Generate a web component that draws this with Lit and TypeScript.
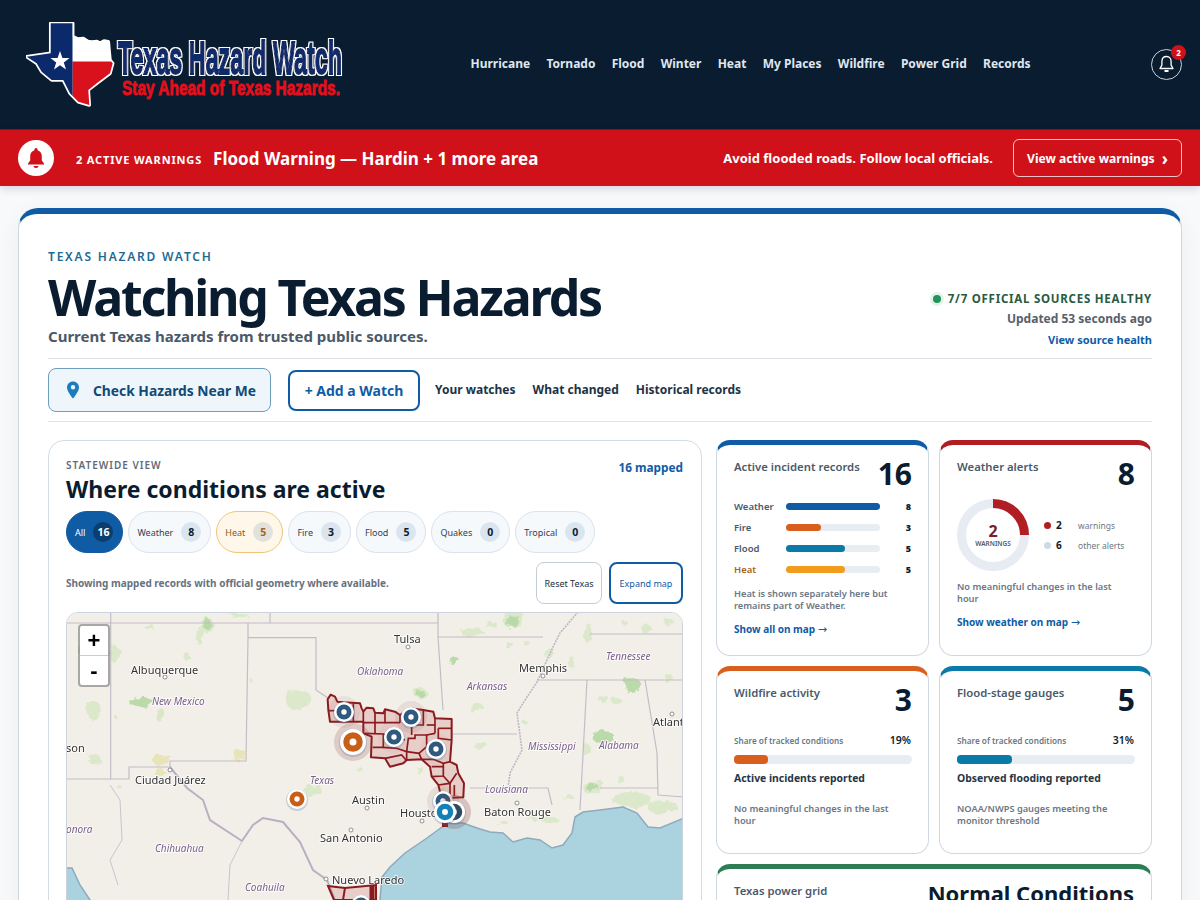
import { LitElement, html, css, svg } from "lit";
import { customElement } from "lit/decorators.js";

const pts = (a: number[][]) => a.map((p) => p.join(",")).join(" ");

const greens: number[][] = [
  [207,625,7,8],[240,615,10,2],[93,710,8,10],[115,718,3,3],[297,700,13,10],[200,637,3,8],[187,657,3,4],[150,627,3,2],[115,653,5,9],[160,715,3,5],[95,760,6,6],[312,790,8,6],[120,787,3,3],
  [513,620,10,8],[473,632,13,4],[492,625,5,4],[420,693,8,5],[477,707,7,5],[510,645,4,3],[527,643,3,2],[550,653,5,5],[572,662,3,6],[588,632,4,9],[603,698,5,3],[668,678,4,5],[618,700,6,3],[647,628,4,4],
  [587,748,4,6],[480,745,5,3],[593,787,10,6],[630,800,20,8],[663,807,16,7],[620,780,3,3],[570,797,5,3],[548,820,10,3],[503,823,4,3],[533,818,4,3],[668,622,5,3],[625,622,4,3],[525,722,4,2],[80,648,3,4],[250,680,2,2],[360,770,3,2],[442,790,3,2],[420,770,4,3],
];
const darkGreens: number[][] = [[142,702,10,5],[207,625,4,6],[455,660,5,3],[632,685,8,8],[602,737,10,7],[513,622,6,6],[420,693,5,3],[593,787,6,4]];
const yellows: number[][] = [[160,760,9,5],[238,755,6,5],[160,773,5,4],[160,716,3,5]];

const cities: [string, number, number, boolean][] = [
  ["Tulsa", 394, 643, false],["Albuquerque", 131, 674, false],["New Mexico", 152, 705, true],["Oklahoma", 357, 675, true],["Memphis", 519, 672, false],
  ["Arkansas", 467, 690, true],["Tennessee", 606, 660, true],["Atlanta", 653, 726, false],["Mississippi", 528, 750, true],["Alabama", 599, 749, true],
  ["son", 66, 752, false],["Ciudad Juárez", 135, 784, false],["Texas", 310, 784, true],["Austin", 352, 804, false],["Louisiana", 485, 793, true],
  ["Houston", 400, 817, false],["Baton Rouge", 484, 816, false],["San Antonio", 320, 842, false],["Chihuahua", 155, 852, true],["onora", 66, 833, true],
  ["Nuevo Laredo", 332, 884, false],["Coahuila", 245, 891, true],
];

const dots = [[165,677],[170,770],[408,647],[543,676],[367,808],[351,830],[422,821],[517,803],[672,714],[326,879]];

const outline = pts([[83,88],[92,74],[105,80],[112,95],[130,97],[180,100],[185,115],[190,125],[200,113],[220,115],[225,128],[250,130],[255,118],[285,125],[300,135],[330,115],[370,120],[400,125],[405,145],[455,147],[455,210],[450,275],[470,285],[475,310],[492,340],[490,382],[425,385],[415,345],[395,320],[390,290],[365,268],[320,270],[310,280],[270,290],[255,265],[213,262],[215,200],[190,190],[190,155],[90,155],[85,120]]);

const inner: number[][][] = [
  [[85,122],[160,122]],[[160,100],[160,155]],[[190,125],[190,155]],[[225,128],[225,192]],[[255,118],[255,160]],[[190,158],[300,158]],
  [[195,190],[250,192],[250,232],[218,232]],[[250,192],[315,210]],[[250,232],[290,235],[320,245],[320,270]],[[255,265],[305,255],[318,270]],
  [[320,245],[357,250],[365,268]],[[320,245],[325,205],[345,205],[345,195],[380,195],[380,230],[357,250]],[[335,165],[335,195]],[[370,120],[370,165],[335,165]],
  [[405,145],[405,190]],[[415,175],[455,175]],[[415,175],[415,205],[455,210]],[[380,165],[405,165]],[[380,195],[405,190]],[[365,268],[400,268],[430,280],[450,275]],
  [[395,290],[430,290],[430,280]],[[395,320],[430,318],[430,290]],[[430,318],[450,340],[470,310]],[[415,345],[450,340],[450,380]],[[463,345],[463,378]],[[300,158],[300,135]],
];

const pins: [number, number, number, string, number][] = [
  [344,712,10,"#2f5a80",.08],[353,742,13,"#c95f17",.2],[411,717,10,"#2f5a80",.1],[394,737,10,"#2f5a80",.05],[436,749,10,"#2f5a80",.05],
  [297,799,10,"#c95f17",0],[443,801,10,"#2f5a80",.1],[361,905,10,"#2f5a80",0],[454,812,11,"#2f4a60",.25],[445,812,11,"#1580b8",0],
];

const coast = [[380,900],[382,877],[390,867],[405,853],[427,838],[442,827],[448,823],[463,823],[477,828],[490,832],[503,833],[513,842],[527,838],[540,840],[552,848],[563,845],[572,833],[575,817],[583,812],[600,810],[623,807],[637,813],[648,827],[660,828],[684,818]];

@customElement("app-root")
export class AppRoot extends LitElement {
  static styles = css`
    :host { display: block; height: 900px; overflow: hidden; background: #f8f9fb; font-family: "Noto Sans", sans-serif; color: #0a1c2f; }
    a { text-decoration: none; color: inherit; }
    .top { height: 129px; background: #0a1c2f; display: flex; align-items: center; justify-content: space-between; padding: 0 18px 0 26px; border-bottom: 1px solid #2a3a4a; }
    .logo { display: block; width: 320px; height: 86px; }
    .logo text { font-family: "Liberation Sans", sans-serif; font-weight: 700; }
    .brand { fill: #0b2a6b; stroke: #0b2a6b; stroke-width: 2px; font-size: 47px; }
    .tag { fill: #e4101c; stroke: #e4101c; stroke-width: .8px; font-size: 21px; }
    nav { display: flex; gap: 16.25px; font-size: 12px; font-weight: 700; color: #dfe7ef; margin: -2px 0 0 4px; }
    .bellbtn { position: relative; width: 31px; height: 31px; box-sizing: border-box; border: 1px solid #c9d2da; border-radius: 50%; display: flex; align-items: center; justify-content: center; }
    .badge { position: absolute; top: -5px; right: -5px; width: 15px; height: 15px; border-radius: 50%; background: #d0111a; color: #fff; font-size: 8px; font-weight: 700; display: flex; align-items: center; justify-content: center; }
    .banner { height: 56px; background: #d0111a; color: #fff; display: flex; align-items: center; padding: 0 18px; box-shadow: 0 3px 8px rgba(10, 28, 47, .15); position: relative; }
    .bcircle { width: 36px; height: 36px; border-radius: 50%; background: #fff; display: flex; align-items: center; justify-content: center; margin-right: 22px; }
    .bcount { font-size: 11px; font-weight: 700; letter-spacing: .85px; margin-right: 11px; padding-top: 2px; }
    .btitle { font-size: 17px; font-weight: 700; flex: 1; }
    .bmsg { font-size: 13px; font-weight: 700; margin-right: 20px; }
    .bbtn { height: 38px; width: 169px; box-sizing: border-box; border: 1px solid #f3c4c6; border-radius: 6px; display: flex; align-items: center; justify-content: center; gap: 7px; font-size: 12.1px; font-weight: 700; }
    .bbtn b { font-size: 17px; font-weight: 700; line-height: 17px; }
    .page { padding: 22px 18px; }
    .hero { background: #fff; border: 1px solid #cfd8e3; border-top: 6px solid #0f5ca5; border-radius: 20px; padding: 35px 29px 30px; box-shadow: 0 6px 24px rgba(10, 28, 47, .05); }
    .head { display: flex; justify-content: space-between; align-items: flex-end; padding-bottom: 10px; border-bottom: 1px solid #dfe4ea; height: 99px; }
    .htext { align-self: flex-start; padding-top: 1px; }
    .eyebrow { font-size: 12px; font-weight: 600; letter-spacing: 1.8px; color: #1d6a94; line-height: 14px; }
    h1 { margin: 4px 0 0; font-size: 50px; line-height: 58px; font-weight: 700; letter-spacing: -2.2px; }
    .sub { font-size: 15px; font-weight: 700; color: #4a5a6a; line-height: 20px; margin-top: 0; }
    .status { display: flex; flex-direction: column; align-items: flex-end; }
    .health { display: flex; align-items: center; gap: 6px; font-size: 11.5px; font-weight: 700; letter-spacing: .75px; color: #2a5a40; line-height: 16px; }
    .hdot { width: 8px; height: 8px; border-radius: 50%; background: #229457; box-shadow: 0 0 0 3px #e3f3ea; margin-right: 1px; }
    .upd { font-size: 12px; font-weight: 700; color: #56616d; line-height: 16px; margin-top: 4px; }
    .vsh { font-size: 11px; font-weight: 700; color: #0f5ca5; line-height: 16px; margin-top: 5px; }
    .actions { display: flex; align-items: center; padding: 9px 0; border-bottom: 1px solid #dfe4ea; height: 44px; }
    .near { width: 223px; height: 44px; box-sizing: border-box; background: #eef6fc; border: 1px solid #6d9cbc; border-radius: 8px; display: flex; align-items: center; padding-left: 15px; gap: 11px; font-size: 13.8px; font-weight: 700; color: #114a75; margin-right: 17px; }
    .add { width: 132px; height: 41px; box-sizing: border-box; border: 2px solid #0f5ca5; border-radius: 8px; display: flex; align-items: center; justify-content: center; font-size: 14px; font-weight: 700; color: #0f5ca5; margin-right: 15px; }
    .lnk { font-size: 12px; font-weight: 700; color: #1d3346; margin: -2px 17px 0 0; }
    .grid { display: grid; grid-template-columns: 654px 1fr; gap: 14px; margin-top: 18px; }
    .panel { border: 1px solid #d3dbe4; border-radius: 16px; padding: 17px 18px 17px 17px; height: 600px; overflow: hidden; }
    .phead { display: flex; justify-content: space-between; }
    .kick { font-size: 10px; font-weight: 600; letter-spacing: 1px; color: #5f6c79; line-height: 14px; }
    .mapped { font-size: 11.8px; font-weight: 700; color: #0f5ca5; line-height: 18px; }
    h2 { margin: -2px 0 0; font-size: 23px; line-height: 30px; font-weight: 700; }
    .chips { display: flex; gap: 5px; margin-top: 7px; }
    .chip { height: 42px; box-sizing: border-box; border: 1px solid #dbe2ea; border-radius: 21px; background: #f6f9fc; display: flex; align-items: center; gap: 8px; padding: 0 9px 0 8px; font-size: 9px; color: #33414f; }
    .chip i { width: 20px; height: 20px; border-radius: 50%; background: #dbe5ef; font-style: normal; font-weight: 700; font-size: 10.5px; display: flex; align-items: center; justify-content: center; color: #0a1c2f; }
    .chip.on { background: #0f5ca5; border-color: #0f5ca5; color: #fff; }
    .chip.on i { background: #0b3d6e; color: #fff; }
    .chip.heat { background: #fff8ea; border-color: #eec678; color: #8a5a17; }
    .chip.heat i { background: #e2e2dc; color: #a8641a; }
    .tools { display: flex; align-items: center; margin-top: 9px; gap: 7px; }
    .tools span { flex: 1; font-size: 10px; font-weight: 700; color: #66727f; }
    .tbtn { height: 42px; box-sizing: border-box; border: 1px solid #c4ccd4; border-radius: 8px; display: flex; align-items: center; justify-content: center; font-size: 9px; width: 66px; color: #22303d; }
    .tbtn.pri { width: 74px; border: 2px solid #0f5ca5; color: #0f5ca5; }
    .map { position: relative; margin-top: 8px; height: 400px; border: 1px solid #cbd3dc; border-radius: 12px; overflow: hidden; box-sizing: border-box; }
    .map svg { display: block; position: absolute; left: -1px; top: -1px; }
    .map text { font-family: "Noto Sans", sans-serif; font-size: 11px; fill: #333; paint-order: stroke; stroke: rgba(255, 255, 255, .7); stroke-width: 2px; }
    .map text.st { font-style: italic; font-size: 10px; fill: #7a5f8a; }
    .zoom { position: absolute; left: 11px; top: 11px; width: 32px; box-sizing: border-box; background: #fff; border: 2px solid rgba(0, 0, 0, .3); border-radius: 4px; background-clip: padding-box; }
    .zoom div { height: 29px; display: flex; align-items: center; justify-content: center; font-family: "Liberation Sans", sans-serif; font-weight: 700; font-size: 22px; color: #000; }
    .zoom div + div { border-top: 1px solid #ccc; }
    .side { display: grid; grid-template-columns: 213px 213px; grid-template-rows: 216px 188px auto; gap: 10px; }
    .card { box-sizing: border-box; background: #fff; border: 1px solid #cfd8e3; border-top: 5px solid #0f5ca5; border-radius: 14px; padding: 13px 16px 13px 17px; }
    .card.wide { grid-column: span 2; height: 160px; border-top-color: #2f7d55; padding-right: 17px; }
    .ch { display: flex; justify-content: space-between; align-items: flex-start; height: 40px; }
    .ct { font-size: 11.3px; font-weight: 600; color: #4a5a6a; line-height: 18px; }
    .cv { font-size: 30px; font-weight: 700; line-height: 36px; margin-top: -2px; }
    .rows { display: grid; gap: 11px; margin-top: 2px; }
    .row { display: grid; grid-template-columns: 52px 94px 1fr; align-items: center; height: 10px; font-size: 9.5px; font-weight: 600; color: #4a5a6a; }
    .row.h { color: #a8641a; }
    .row b { text-align: right; color: #0a1c2f; font-size: 9px; padding-right: 1px; }
    .track { display: block; height: 7px; border-radius: 4px; background: #e8edf2; }
    .fill { display: block; height: 100%; border-radius: 4px; }
    .note { font-size: 9.25px; font-weight: 600; line-height: 12px; color: #6b7785; }
    .n-a { margin-top: 15px; }
    .n-b { margin-top: 10px; }
    .n-c { margin-top: 18px; }
    .cl { display: block; font-size: 10px; font-weight: 700; color: #0f5ca5; line-height: 14px; margin-top: 10px; }
    .cl span { font-family: "DejaVu Sans", sans-serif; font-weight: 400; font-size: 11px; }
    .donut { display: flex; align-items: center; margin-top: 1px; }
    .legend { display: grid; grid-template-columns: 7px 17px auto; align-items: center; column-gap: 5px; row-gap: 6px; margin-left: 15px; font-size: 8.5px; color: #6b7785; }
    .legend i { width: 7px; height: 7px; border-radius: 50%; }
    .legend b { font-size: 10px; color: #0a1c2f; line-height: 14px; }
    .share { display: flex; justify-content: space-between; align-items: center; font-size: 8.2px; font-weight: 600; color: #6b7785; margin-top: 8px; height: 16px; padding-right: 1px; }
    .share b { font-size: 10.5px; color: #0a1c2f; font-weight: 600; }
    .track.big { height: 9px; margin-top: 7px; border-radius: 5px; }
    .rep { font-size: 10.4px; font-weight: 700; color: #243646; line-height: 14px; margin-top: 7px; }
    .big-v { font-size: 22px; font-weight: 700; line-height: 30px; margin-top: -4px; }
  `;

  private texas() {
    const shape = pts([[50.7,23.3],[72.7,23.3],[72.7,36.7],[78,39],[83.3,38.6],[88,41.5],[92,42],[97,41.4],[100,43.2],[104,41],[108.3,41.7],[109,50],[110,60],[112.7,63.3],[110,73.3],[96.7,83.3],[88.3,90],[89.3,105],[78.3,101.7],[70,93.3],[63.3,80],[51.7,80],[41.7,71.7],[36.7,63.3],[26.7,56.7],[50.7,53.3]]);
    return svg`
      <defs>
        <clipPath id="tx"><polygon points=${shape}></polygon></clipPath>
        <filter id="halo" x="-5%" y="-15%" width="110%" height="130%">
          <feMorphology in="SourceAlpha" operator="dilate" radius="1" result="d"></feMorphology>
          <feFlood flood-color="#fff"></feFlood>
          <feComposite in2="d" operator="in" result="w"></feComposite>
          <feMerge><feMergeNode in="w"></feMergeNode><feMergeNode in="SourceGraphic"></feMergeNode></feMerge>
        </filter>
      </defs>
      <polygon points=${shape} fill="#fff" stroke="#fff" stroke-width="3.5" stroke-linejoin="round"></polygon>
      <g clip-path="url(#tx)">
        <rect x="20" y="20" width="52.7" height="90" fill="#0b2a6b"></rect>
        <rect x="72.7" y="20" width="45" height="41.5" fill="#fff"></rect>
        <rect x="72.7" y="61.5" width="45" height="50" fill="#d8111c"></rect>
      </g>
      <polygon points="60,51 62.4,58 69.6,58 63.8,62.4 66,69.4 60,65.2 54,69.4 56.2,62.4 50.4,58 57.6,58" fill="#fff"></polygon>`;
  }

  private mapSvg() {
    const blob = (list: number[][], fill: string, op: number) =>
      list.map((g) => svg`<ellipse cx=${g[0]} cy=${g[1]} rx=${g[2]} ry=${g[3]} fill=${fill} opacity=${op}></ellipse>`);
    return svg`<svg width="618" height="400" viewBox="66 612 618 400">
      <defs>
        <filter id="rough" x="0" y="0" width="100%" height="100%">
          <feTurbulence type="fractalNoise" baseFrequency=".12" numOctaves="3" seed="4"></feTurbulence>
          <feDisplacementMap in="SourceGraphic" scale="9" xChannelSelector="R" yChannelSelector="G"></feDisplacementMap>
        </filter>
      </defs>
      <rect x="66" y="612" width="618" height="400" fill="#f2efe9"></rect>
      <g filter="url(#rough)">
        ${blob(yellows, "#e6e2b4", .9)}
        ${blob(greens, "#d8e8c6", .9)}
        ${blob(darkGreens, "#b7d8a6", .95)}
      </g>
      <polygon points=${pts([...coast, [684,1012], [380,1012]])} fill="#aad3df" stroke="#8fa9bd" stroke-width="1.5"></polygon>
      <polygon points=${pts([[66,868],[72,868],[80,885],[90,900],[90,1012],[66,1012]])} fill="#aad3df" stroke="#8fa9bd" stroke-width="1.5"></polygon>
      <g fill="none" stroke="#c3bcc8" stroke-width="1.2">
        <polyline points="110.7,612 110.7,779"></polyline>
        <polyline points="66,623 248,623 248,637.7 316,637.7 316,690 328,698"></polyline>
        <polyline points="248,623 438,623"></polyline>
        <polyline points="248,637.7 246,761 170,761"></polyline>
        <polyline points="170,761 170,767 129,767 129,779 66,779"></polyline>
        <polyline points="270,612 270,623"></polyline>
        <polyline points="438,612 438,637 443,710"></polyline>
        <polyline points="452,734 517,734"></polyline>
        <polyline points="438,637 543,637"></polyline>
        <polyline points="537,680 684,680"></polyline>
        <polyline points="590,634 684,634"></polyline>
        <polyline points="587,680 580,810"></polyline>
        <polyline points="645,680 657,753 658,795 684,797"></polyline>
        <polyline points="600,788 658,788"></polyline>
        <polyline points="470,788 548,788 552,805"></polyline>
      </g>
      <polyline points="170,767 187,788 203,800 210,820 242,841 253,825 263,818 283,822 300,842 313,870 327,880 335,900" fill="none" stroke="#b9afc2" stroke-width="2"></polyline>
      <polyline points="242,841 230,865 228,900" fill="none" stroke="#c9c3cc" stroke-width="1"></polyline>
      <polyline points="110,785 120,800 122,840 110,860 118,885" fill="none" stroke="#c9c3cc" stroke-width="1"></polyline>
      <polyline points="578,612 560,633 553,647 547,660 537,682 527,697 517,713 522,750 510,773 508,788" fill="none" stroke="#bdb6c6" stroke-width="1.6" stroke-dasharray="2 1"></polyline>
      ${dots.map((d) => svg`<circle cx=${d[0]} cy=${d[1]} r="2" fill="#fff" stroke="#777" stroke-width=".8"></circle>`)}
      ${cities.map((c) => svg`<text x=${c[1]} y=${c[2]} class=${c[3] ? "st" : ""}>${c[0]}</text>`)}
      <g transform="translate(300 670) scale(.3333)">
        <polygon points=${outline} fill="rgba(185,50,50,.17)" stroke="#8b1a1e" stroke-width="6" stroke-linejoin="round"></polygon>
        ${inner.map((l) => svg`<polyline points=${pts(l)} fill="none" stroke="#8b1a1e" stroke-width="5"></polyline>`)}
      </g>
      <polygon points="328,886 345,888 376,885 376,900 334,900" fill="rgba(185,50,50,.17)" stroke="#8b1a1e" stroke-width="2"></polygon>
      <line x1="372" y1="885" x2="372" y2="900" stroke="#8b1a1e" stroke-width="5"></line>
      <polyline points="345,888 343,900" fill="none" stroke="#8b1a1e" stroke-width="2"></polyline>
      <line x1="445" y1="820" x2="445" y2="827" stroke="#8b1a1e" stroke-width="6"></line>
      ${pins.map((p) => svg`
        ${p[4] ? svg`<circle cx=${p[0]} cy=${p[1]} r=${p[2] + 6} fill="#8b3c3c" opacity=${p[4]}></circle>` : ""}
        <circle cx=${p[0]} cy=${p[1] + 1} r=${p[2] + 1} fill="rgba(60,110,160,.25)"></circle>
        <circle cx=${p[0]} cy=${p[1]} r=${p[2]} fill="#fff"></circle>
        <circle cx=${p[0]} cy=${p[1]} r=${p[2] * 0.75} fill=${p[3]}></circle>
        <circle cx=${p[0]} cy=${p[1]} r=${p[2] * 0.27} fill="#fff"></circle>`)}
    </svg>`;
  }

  render() {
    const nav = ["Hurricane","Tornado","Flood","Winter","Heat","My Places","Wildfire","Power Grid","Records"];
    const chips: [string, number, string][] = [["All",16,"on"],["Weather",8,""],["Heat",5,"heat"],["Fire",3,""],["Flood",5,""],["Quakes",0,""],["Tropical",0,""]];
    const rows: [string, number, string][] = [["Weather",8,"#0f5ca5"],["Fire",3,"#d95f1e"],["Flood",5,"#0a7ba8"],["Heat",5,"#f29b1c"]];
    return html`
      <header class="top">
        <svg class="logo" viewBox="26 22 320 86">
          ${this.texas()}
          <g filter="url(#halo)">
            <text class="brand" x="118" y="74" textLength="224" lengthAdjust="spacingAndGlyphs">Texas Hazard Watch</text>
          </g>
          <text class="tag" x="122" y="95" textLength="218" lengthAdjust="spacingAndGlyphs">Stay Ahead of Texas Hazards.</text>
        </svg>
        <nav>${nav.map((n) => html`<a>${n}</a>`)}</nav>
        <div class="bellbtn">
          <svg width="17" height="19" viewBox="0 0 17 19" fill="none" stroke="#fff" stroke-width="1.3" stroke-linejoin="round"><path d="M8.5 1.5c-3 0-4.600 2.200-4.600 5v3.600L2 13.500h13l-1.900-3.400V6.500c0-2.800-1.600-5-4.600-5z"></path><path d="M6.500 16h4" stroke-width="2"></path></svg>
          <span class="badge">2</span>
        </div>
      </header>
      <section class="banner">
        <div class="bcircle"><svg width="20" height="22" viewBox="0 0 20 22" fill="#d0111a"><path d="M10 1a1.600 1.600 0 0 0-1.600 1.600v.6C5.600 4 4.200 6.400 4.200 9v4.500L2 16.500v1h16v-1l-2.200-3V9c0-2.600-1.400-5-4.200-5.800v-.6A1.600 1.600 0 0 0 10 1z"></path><path d="M7.500 19h5a2.500 2 0 0 1-5 0z"></path></svg></div>
        <span class="bcount">2 ACTIVE WARNINGS</span>
        <span class="btitle">Flood Warning — Hardin + 1 more area</span>
        <span class="bmsg">Avoid flooded roads. Follow local officials.</span>
        <a class="bbtn">View active warnings <b>›</b></a>
      </section>
      <main class="page">
        <div class="hero">
          <div class="head">
            <div class="htext">
              <div class="eyebrow">TEXAS HAZARD WATCH</div>
              <h1>Watching Texas Hazards</h1>
              <div class="sub">Current Texas hazards from trusted public sources.</div>
            </div>
            <div class="status">
              <div class="health"><span class="hdot"></span>7/7 OFFICIAL SOURCES HEALTHY</div>
              <div class="upd">Updated 53 seconds ago</div>
              <a class="vsh">View source health</a>
            </div>
          </div>
          <div class="actions">
            <a class="near"><svg width="18" height="18" viewBox="0 0 18 18"><path fill="#1b7cbf" d="M9 .5c-3.300 0-6 2.600-6 5.900C3 10.500 9 17.500 9 17.500s6-7 6-11.100C15 3.100 12.300.5 9 .5zm0 8a2.200 2.200 0 1 1 0-4.400 2.200 2.200 0 0 1 0 4.400z"></path></svg>Check Hazards Near Me</a>
            <a class="add">+ Add a Watch</a>
            <a class="lnk">Your watches</a>
            <a class="lnk">What changed</a>
            <a class="lnk">Historical records</a>
          </div>
          <div class="grid">
            <section class="panel">
              <div class="phead"><div class="kick">STATEWIDE VIEW</div><div class="mapped">16 mapped</div></div>
              <h2>Where conditions are active</h2>
              <div class="chips">${chips.map((c) => html`<div class="chip ${c[2]}">${c[0]}<i>${c[1]}</i></div>`)}</div>
              <div class="tools"><span>Showing mapped records with official geometry where available.</span><a class="tbtn">Reset Texas</a><a class="tbtn pri">Expand map</a></div>
              <div class="map">
                ${this.mapSvg()}
                <div class="zoom"><div>+</div><div>-</div></div>
              </div>
            </section>
            <aside class="side">
              <article class="card">
                <div class="ch"><div class="ct">Active incident records</div><div class="cv">16</div></div>
                <div class="rows">${rows.map((r) => html`<div class="row ${r[0] === "Heat" ? "h" : ""}"><span>${r[0]}</span><span class="track"><span class="fill" style="width:${(r[1] / 8) * 100}%;background:${r[2]}"></span></span><b>${r[1]}</b></div>`)}</div>
                <div class="note n-a">Heat is shown separately here but remains part of Weather.</div>
                <a class="cl">Show all on map <span>→</span></a>
              </article>
              <article class="card" style="border-top-color:#b01e23">
                <div class="ch"><div class="ct">Weather alerts</div><div class="cv">8</div></div>
                <div class="donut">
                  <svg width="72" height="72" viewBox="0 0 72 72">
                    <circle cx="36" cy="36" r="31.5" fill="none" stroke="#e6ecf2" stroke-width="9"></circle>
                    <path d="M36 4.5a31.5 31.5 0 0 1 31.5 31.5" fill="none" stroke="#b01e23" stroke-width="9"></path>
                    <text x="36" y="38" text-anchor="middle" font-size="16" font-weight="700" fill="#7a1f22" font-family="Noto Sans">2</text>
                    <text x="36" y="47" text-anchor="middle" font-size="6.5" font-weight="600" fill="#4a5a6a" font-family="Noto Sans">WARNINGS</text>
                  </svg>
                  <div class="legend">
                    <i style="background:#b01e23"></i><b>2</b><span>warnings</span>
                    <i style="background:#cfd9e3"></i><b>6</b><span>other alerts</span>
                  </div>
                </div>
                <div class="note n-b">No meaningful changes in the last hour</div>
                <a class="cl">Show weather on map <span>→</span></a>
              </article>
              <article class="card" style="border-top-color:#d95f1e">
                <div class="ch"><div class="ct">Wildfire activity</div><div class="cv">3</div></div>
                <div class="share"><span>Share of tracked conditions</span><b>19%</b></div>
                <div class="track big"><div class="fill" style="width:19%;background:#d95f1e"></div></div>
                <div class="rep">Active incidents reported</div>
                <div class="note n-c">No meaningful changes in the last hour</div>
              </article>
              <article class="card" style="border-top-color:#0a7ba8">
                <div class="ch"><div class="ct">Flood-stage gauges</div><div class="cv">5</div></div>
                <div class="share"><span>Share of tracked conditions</span><b>31%</b></div>
                <div class="track big"><div class="fill" style="width:31%;background:#0a7ba8"></div></div>
                <div class="rep">Observed flooding reported</div>
                <div class="note n-c">NOAA/NWPS gauges meeting the monitor threshold</div>
              </article>
              <article class="card wide">
                <div class="ch"><div class="ct">Texas power grid</div><div class="big-v">Normal Conditions</div></div>
              </article>
            </aside>
          </div>
        </div>
      </main>`;
  }
}
